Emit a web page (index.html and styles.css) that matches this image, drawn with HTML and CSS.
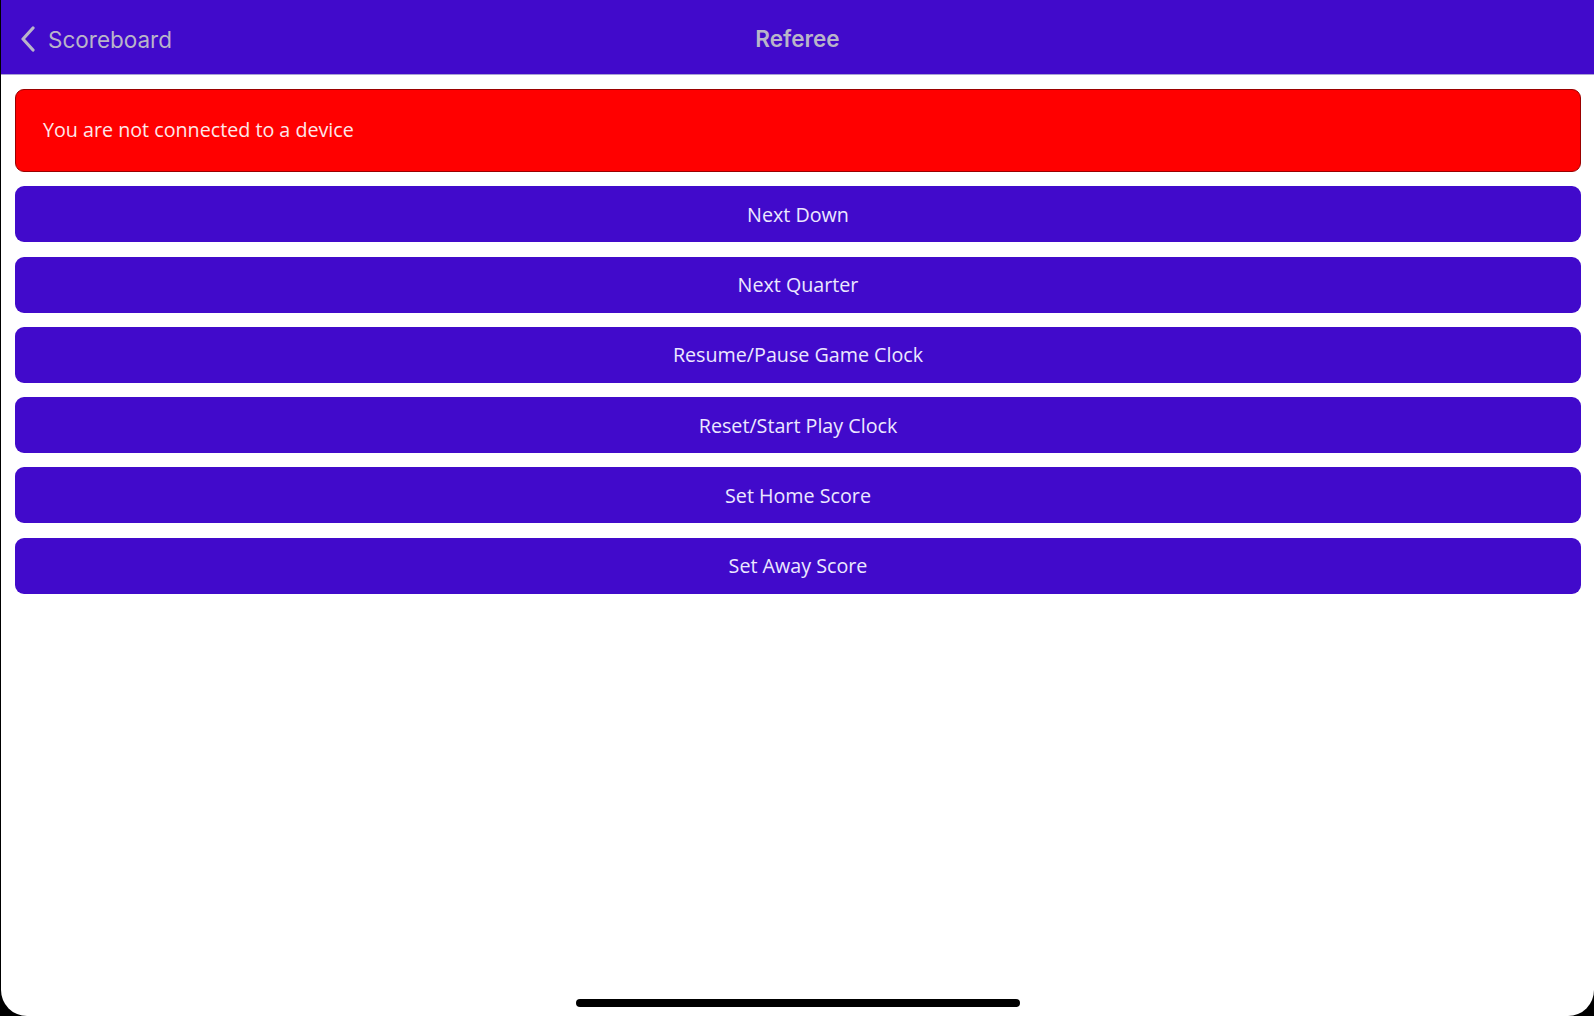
FILE: index.html
```html
<!DOCTYPE html>
<html>
<head>
<meta charset="utf-8">
<link rel="stylesheet" href="styles.css">
</head>
<body>
<div class="screen">
  <header class="navbar">
    <div class="back">
      <svg class="chev" width="18" height="26" viewBox="0 0 18 26"><path d="M14 2 L4 13 L14 24" fill="none" stroke="#b9b5c9" stroke-width="3.2" stroke-linecap="round" stroke-linejoin="round"/></svg>
      <span class="back-label">Scoreboard</span>
    </div>
    <div class="title">Referee</div>
  </header>
  <main class="content">
    <div class="alert">You are not connected to a device</div>
    <button class="btn">Next Down</button>
    <button class="btn">Next Quarter</button>
    <button class="btn">Resume/Pause Game Clock</button>
    <button class="btn">Reset/Start Play Clock</button>
    <button class="btn">Set Home Score</button>
    <button class="btn">Set Away Score</button>
  </main>
  <div class="home-indicator"></div>
</div>
</body>
</html>
```
FILE: styles.css
```css
html, body {
  margin: 0;
  padding: 0;
  background: #000;
  width: 1594px;
  height: 1016px;
  overflow: hidden;
}
.screen {
  position: relative;
  margin-left: 1px;
  width: 1593px;
  height: 1016px;
  background: #fff;
  border-radius: 0 0 26px 26px;
  overflow: hidden;
  font-family: "Open Sans", sans-serif;
}
.navbar {
  position: relative;
  height: 74px;
  background: #410acb;
  border-bottom: 1px solid #a9a1d4;
  display: flex;
  align-items: center;
}
.back {
  display: flex;
  align-items: center;
  padding-left: 18px;
  gap: 11px;
  margin-top: 4px;
}
.chev { display: block; }
.back-label {
  font-family: Inter, "Liberation Sans", sans-serif;
  font-size: 22.5px;
  color: #b9b5c9;
}
.title {
  position: absolute;
  left: 0;
  right: 0;
  top: 0;
  height: 74px;
  line-height: 78px;
  text-align: center;
  font-family: Inter, "Liberation Sans", sans-serif;
  font-weight: 600;
  font-size: 22.5px;
  color: #b9b5c9;
  pointer-events: none;
}
.content {
  display: flex;
  flex-direction: column;
  gap: 14.3px;
  padding: 14px 13px 0 14px;
}
.alert {
  box-sizing: border-box;
  height: 83px;
  background: #ff0000;
  border: 1px solid #9a0000;
  border-radius: 9px;
  color: #fde8ea;
  font-size: 19.7px;
  display: flex;
  align-items: center;
  padding-left: 27px;
  padding-bottom: 3px;
}
.btn {
  height: 56px;
  border: none;
  border-radius: 9px;
  background: #410acb;
  color: #ece8ff;
  font-family: "Open Sans", sans-serif;
  font-size: 19.7px;
  padding: 0;
  cursor: pointer;
}
.home-indicator {
  position: absolute;
  left: 575px;
  bottom: 9px;
  width: 444px;
  height: 8px;
  border-radius: 4px;
  background: #000;
}
```
